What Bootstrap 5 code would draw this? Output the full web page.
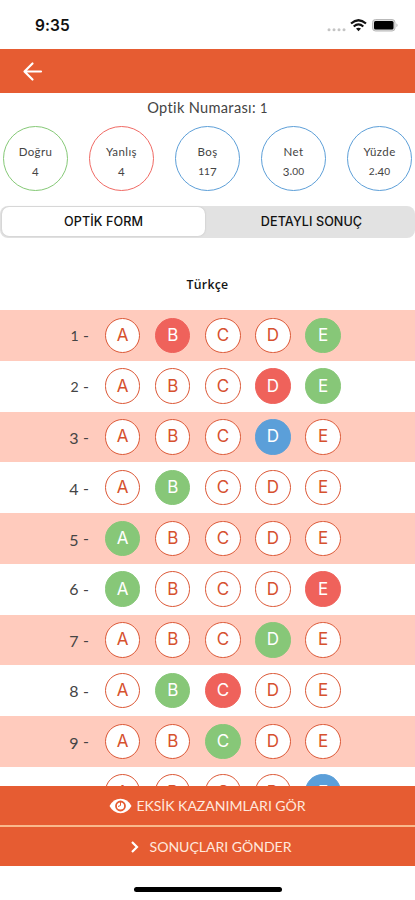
<!DOCTYPE html>
<html lang="tr">
<head>
<meta charset="utf-8">
<meta name="viewport" content="width=device-width, initial-scale=1">
<title>Optik Form</title>
<link href="https://cdn.jsdelivr.net/npm/bootstrap@5.3.0/dist/css/bootstrap.min.css" rel="stylesheet">
<style>
body{font-family:Lato,"Open Sans",sans-serif;color:#444;background:#fff}
.screen{height:900px}
.status{height:49px;padding:2px 16px 0 35px;color:#111}
.clock{font:600 15.5px/1 Inter,sans-serif;letter-spacing:.1px}
.appbar{height:44px;padding-left:22px;background:#e65c32}
.exam-no{height:30px;font-size:14.6px;line-height:30px;letter-spacing:.32px}
.stats{height:65px;margin-top:3px;padding:0 3px}
.stat{width:65px;height:65px;border:1px solid #5d9fd8;font-size:11.5px;line-height:19px;padding-top:4px;letter-spacing:.4px}
.stat.good{border-color:#86c977}
.stat.bad{border-color:#f06a64}
.stat span{height:19px}
.digits{font-size:11.5px;letter-spacing:.1px}
.drop{position:relative;top:1.5px}
.digits .drop{top:1px}
.one{font-size:.88em}
.segments{height:32px;margin-top:15px;background:#e2e2e2;border-radius:8px;padding:1px 1px 1px 2px;font:500 12.6px/30px Inter,sans-serif;letter-spacing:.08px;color:#111}
.segment{flex:0 0 203px;height:29px;border-radius:7px}
.segment.on{background:#fff;box-shadow:0 0 2px #bbb}
.segment-off{padding-left:4px}
.subject{height:72px;padding-top:22px;font:600 12.3px/50px "Open Sans",sans-serif;letter-spacing:.25px;color:#151515}
.answers{height:476px}
.answer{height:50.75px;padding-left:59px}
.answer:nth-child(odd){background:#ffcbbd}
.q{width:30px;font-size:16px;letter-spacing:.1px;margin-right:16px}
.bubble{width:35.4px;height:35.4px;margin-right:14.7px;border:1px solid #dc5836;background:#fff;color:#d6512e;font:400 17px/1 Inter,sans-serif}
.bubble.green,.bubble.red,.bubble.blue{color:#fff}
.bubble.green{background:#87c778;border-color:#87c778}
.bubble.red{background:#ef625b;border-color:#ef625b}
.bubble.blue{background:#5b9fd9;border-color:#5b9fd9}
.action{height:39px;background:#e65c32;color:#ffe8dd;font-size:14.1px;letter-spacing:-.05px}
.action + .action{height:41px;border-top:2px solid #f9b98c;padding-left:6px}
.chevron{margin-right:10px}
.home{width:148px;height:5px;margin-top:21px;background:#000}
</style>
<script src="https://cdn.jsdelivr.net/npm/bootstrap@5.3.0/dist/js/bootstrap.bundle.min.js"></script>
</head>
<body>
<div class="screen d-flex flex-column overflow-hidden">
  <header class="status d-flex align-items-center justify-content-between flex-shrink-0">
    <span class="clock">9:35</span>
    <svg width="72" height="16" viewBox="0 0 72 16" fill="none">
      <g fill="#c4c4c4"><circle cx="2" cy="11.800" r="1.500"/><circle cx="7" cy="11.800" r="1.500"/><circle cx="12" cy="11.800" r="1.500"/><circle cx="17" cy="11.800" r="1.500"/></g>
      <g stroke="#111" stroke-width="2.200"><path d="M24 5.500Q31.500-1 39 5.500M26.700 8.500Q31.500 4.400 36.300 8.500"/></g><path d="M29 10.600Q31.500 8.700 34 10.600L31.500 13.200Z" fill="#111"/>
      <rect x="45.500" y="1.500" width="22.500" height="11.500" rx="3" stroke="#b9b9b9" fill="#ddd"/><rect x="47" y="3" width="19.500" height="8.500" rx="1.500" fill="#000"/><path d="M69.500 5.300q2 2 0 4Z" fill="#aaa"/>
    </svg>
  </header>
  <nav class="appbar d-flex align-items-center flex-shrink-0">
    <svg width="22" height="22" viewBox="0 0 22 22" fill="none" stroke="#fff" stroke-width="2.200" stroke-linecap="round" stroke-linejoin="round"><path d="M19 11.500H3M10.500 3.500L2.500 11.500l8 8"/></svg>
  </nav>
  <div class="exam-no text-center flex-shrink-0">Optik Numarası: <span class="one">1</span></div>
  <section class="stats d-flex justify-content-between flex-shrink-0">
    <div class="stat good rounded-circle d-flex flex-column justify-content-center text-center"><span>Doğru</span><span class="digits"><span class="drop">4</span></span></div>
    <div class="stat bad rounded-circle d-flex flex-column justify-content-center text-center"><span>Yanlış</span><span class="digits"><span class="drop">4</span></span></div>
    <div class="stat rounded-circle d-flex flex-column justify-content-center text-center"><span>Boş</span><span class="digits"><span class="one">11</span><span class="drop">7</span></span></div>
    <div class="stat rounded-circle d-flex flex-column justify-content-center text-center"><span>Net</span><span class="digits"><span class="drop">3</span>.<span class="one">00</span></span></div>
    <div class="stat rounded-circle d-flex flex-column justify-content-center text-center"><span>Yüzde</span><span class="digits"><span class="one">2</span>.<span class="drop">4</span><span class="one">0</span></span></div>
  </section>
  <div class="segments d-flex text-center flex-shrink-0"><div class="segment on">OPTİK FORM</div><div class="segment-off flex-grow-1">DETAYLI SONUÇ</div></div>
  <h1 class="subject text-center mb-0 flex-shrink-0">Türkçe</h1>
  <main class="answers overflow-hidden flex-shrink-0" id="answers"></main>
  <footer class="flex-shrink-0">
    <div class="action d-flex align-items-center justify-content-center">
      <svg class="me-1" width="23" height="16" viewBox="0 0 23 16"><path fill="#fff" d="M.5 8Q4.500.8 11.500.8T22.500 8Q18.500 15.200 11.500 15.200T.5 8Z"/><circle cx="11.500" cy="8" r="4.500" fill="none" stroke="#e65c32" stroke-width="1.800"/><path d="M11.500 3.500V7.500L9 8.500" fill="none" stroke="#e65c32" stroke-width="1"/></svg>
      <span>EKSİK KAZANIMLARI GÖR</span>
    </div>
    <div class="action d-flex align-items-center justify-content-center">
      <svg class="chevron" width="10" height="14" viewBox="0 0 10 14" fill="none" stroke="#fff" stroke-width="2.200"><path d="M2 2l5 5-5 5"/></svg>
      <span>SONUÇLARI GÖNDER</span>
    </div>
  </footer>
  <div class="home rounded-pill mx-auto flex-shrink-0"></div>
</div>
<script>
// Marked options for each question: letter -> state colour
const marks = [{B:'red',E:'green'},{D:'red',E:'green'},{D:'blue'},{B:'green'},{A:'green'},{A:'green',E:'red'},{D:'green'},{B:'green',C:'red'},{C:'green'},{E:'blue'}];
// Old-style figures: 1 and 2 are short, 3, 4, 5, 7 and 9 descend
document.getElementById('answers').innerHTML = marks.map((m, i) => {
  const n = i + 1, figure = n < 3 ? 'one' : [3,4,5,7,9].includes(n) ? 'drop' : '';
  return `<div class="answer d-flex align-items-center"><span class="q text-end text-nowrap"><span class="${figure}">${n}</span> -</span>` +
    [...'ABCDE'].map(l => `<span class="bubble rounded-circle d-flex align-items-center justify-content-center flex-shrink-0 ${m[l] || ''}">${l}</span>`).join('') + '</div>';
}).join('');
</script>
</body>
</html>
